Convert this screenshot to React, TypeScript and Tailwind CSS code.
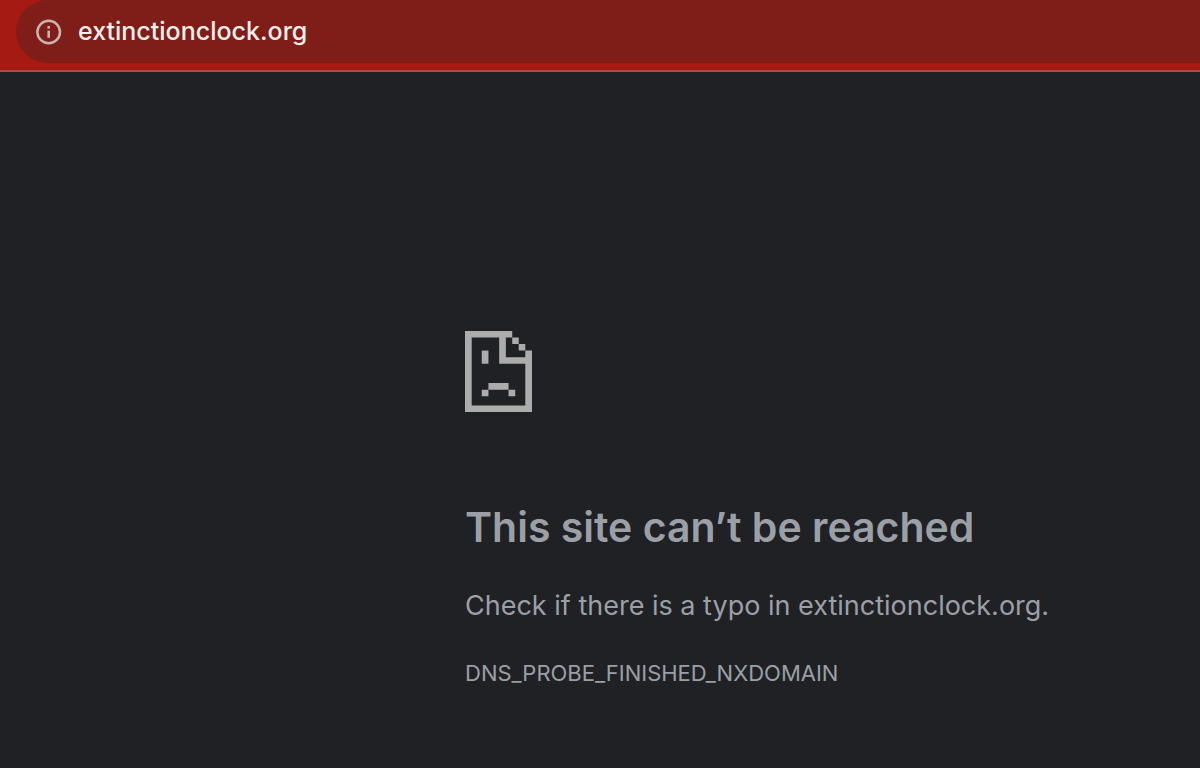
function InfoIcon() {
  return (
    <svg viewBox="0 0 26 26" className="size-[26px]" fill="none" aria-hidden="true">
      <circle cx="12.7" cy="13" r="11.3" stroke="#c9b3b1" strokeWidth="2.5" />
      <path d="M12.7 11.6v7.2" stroke="#c9b3b1" strokeWidth="2.6" />
      <path d="M12.7 7v2.6" stroke="#c9b3b1" strokeWidth="2.6" />
    </svg>
  );
}

function SadPageIcon() {
  return (
    <svg
      viewBox="0 0 10 12"
      preserveAspectRatio="none"
      className="h-[81px] w-[67px]"
      fill="#acacac"
      aria-hidden="true"
    >
      <path d="M0 0H7.05V.95H6.1V3.9H9V2.9H10V12H0ZM1 .95V11.05H9V4.85H5.1V.95Z" fillRule="evenodd" />
      <path d="M7.05 .95H8.02V1.93H7.05ZM8.02 1.93H9V2.9H8.02Z" />
      <path d="M2.5 2.9H3.5V4.85H2.5Z" />
      <path d="M3.5 7.7H6.5V8.7H3.5ZM2.5 8.7H3.5V9.65H2.5ZM6.5 8.7H7.5V9.65H6.5Z" />
    </svg>
  );
}

export default function App() {
  return (
    <div className="flex min-h-screen flex-col bg-[#202124] font-[Inter,sans-serif] text-[#9aa0a6]">
      <header className="border-b-2 border-[#ac4a43] bg-[#a51b13] pb-[7px] pl-4">
        <div className="flex h-[63px] items-center gap-4 rounded-l-full bg-[#7f1d18] pl-5">
          <button type="button" aria-label="View site information">
            <InfoIcon />
          </button>
          <input
            type="text"
            aria-label="Address"
            defaultValue="extinctionclock.org"
            className="min-w-0 flex-1 bg-transparent text-[25px] font-medium text-[#fbeeec] outline-none"
          />
        </div>
      </header>
      <main className="pl-[465px] pt-[259px]">
        <SadPageIcon />
        <h1 className="mt-[87px] text-[41px] leading-[56px] font-semibold">This site can’t be reached</h1>
        <p className="mt-[31px] text-[27px] leading-[40px]">Check if there is a typo in extinctionclock.org.</p>
        <p className="mt-[31px] text-[22px] leading-[32px]">DNS_PROBE_FINISHED_NXDOMAIN</p>
      </main>
    </div>
  );
}
